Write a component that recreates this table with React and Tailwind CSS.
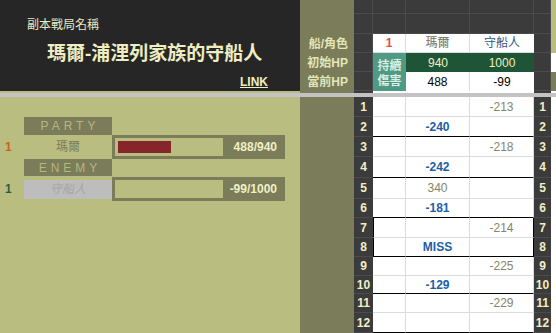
import React from "react";

const FONT = "font-['Liberation_Sans','Noto_Sans_CJK_TC',sans-serif]";

const rows = [
  { h: "h-[20px]", b: "", bc: "", c: "-213", line: "" },
  { h: "h-[20px]", b: "-240", bc: "blue", c: "", line: "black" },
  { h: "h-[20px]", b: "", bc: "", c: "-218", line: "" },
  { h: "h-[21px]", b: "-242", bc: "blue", c: "", line: "black" },
  { h: "h-[21px]", b: "340", bc: "gray", c: "", line: "" },
  { h: "h-[19px]", b: "-181", bc: "blue", c: "", line: "black" },
  { h: "h-[20px]", b: "", bc: "", c: "-214", line: "", box: true },
  { h: "h-[19px]", b: "MISS", bc: "blue", c: "", line: "black", box: true },
  { h: "h-[19px]", b: "", bc: "", c: "-225", line: "" },
  { h: "h-[18px]", b: "-129", bc: "blue", c: "", line: "black" },
  { h: "h-[19px]", b: "", bc: "", c: "-229", line: "" },
  { h: "h-[20px]", b: "", bc: "", c: "", line: "black" },
];

function DataRow({ r, i }) {
  const bb = r.line === "black" ? "border-b-black" : "border-b-[#dcdcdc]";
  const left = r.box ? "border-l border-l-black" : "";
  const right = r.box ? "border-r-black" : "border-r-[#dcdcdc]";
  const bColor =
    r.bc === "blue"
      ? "font-bold text-[#1c5ea6]"
      : "text-[#85856a]";
  return (
    <div className={`flex ${r.h}`}>
      <div className="w-[19px] h-full bg-[#3b3b3b] border-b border-b-[#4b4b4b] flex items-center justify-center text-[12px] font-bold text-[#f1efc4]">
        {i + 1}
      </div>
      <div className={`w-[33px] h-full bg-white border-b border-r border-r-[#dcdcdc] ${bb} ${left}`}></div>
      <div className={`w-[64px] h-full bg-white border-b border-r border-r-[#dcdcdc] ${bb} flex items-center justify-center text-[12px] ${bColor}`}>
        {r.b}
      </div>
      <div className={`w-[64px] h-full bg-white border-b border-r ${right} ${bb} flex items-center justify-center text-[12px] text-[#85856a]`}>
        {r.c}
      </div>
      <div className="w-[17px] h-full bg-[#3b3b3b] border-b border-b-[#4b4b4b] flex items-center justify-center text-[12px] font-bold text-[#f1efc4]">
        {i + 1}
      </div>
      <div className="w-[5px] h-full bg-white"></div>
    </div>
  );
}

function Bar({ fill }) {
  return (
    <div className="w-[173px] h-[24px] bg-[#7b7c5a] flex items-center p-[3px]">
      <div className="w-[108px] h-[18px] bg-[#b9bd7f] p-[3px]">
        {fill ? <div className="w-[53px] h-full bg-[#86252a]"></div> : null}
      </div>
      <div className="flex-1 text-right pr-[5px] font-bold text-[12px] text-[#f0f0c4]">
        {fill ? "488/940" : "-99/1000"}
      </div>
    </div>
  );
}

export default function App() {
  const dark = "bg-[#3b3b3b] border-b border-r border-[#4b4b4b]";
  return (
    <div className={`w-[556px] h-[333px] overflow-hidden flex flex-col ${FONT}`}>
      {/* top section */}
      <div className="flex h-[91px]">
        <div className="w-[300px] h-full bg-[#262626] flex flex-col">
          <div className="pl-[27px] pt-[17px] text-[12px] leading-[16px] text-[#ebe8c0]">副本戰局名稱</div>
          <div className="pl-[47px] mt-[8px] text-[19px] leading-[26px] font-bold text-[#eeeec2]">
            瑪爾-浦浬列家族的守船人
          </div>
          <div className="mt-[8px] self-end pr-[32px] text-[12px] leading-[14px] font-bold underline text-[#eeeec2]">
            LINK
          </div>
        </div>
        <div className="w-[256px] h-full grid grid-cols-[54px_19px_33px_64px_64px_17px_5px] grid-rows-[14px_20px_19px_19px_19px]">
          {/* row 1 */}
          <div className="bg-[#7b7c5a]"></div>
          <div className={dark}></div>
          <div className={dark}></div>
          <div className={dark}></div>
          <div className={dark}></div>
          <div className={dark}></div>
          <div className="bg-[#b9bd7f]"></div>
          {/* row 2 */}
          <div className="bg-[#7b7c5a]"></div>
          <div className={dark}></div>
          <div className={dark}></div>
          <div className={dark}></div>
          <div className={dark}></div>
          <div className={dark}></div>
          <div className="bg-[#b9bd7f]"></div>
          {/* row 3 */}
          <div className="bg-[#7b7c5a] flex items-center justify-end pr-[6px] text-[12px] font-bold text-[#e2e6b8]">船/角色</div>
          <div className={dark}></div>
          <div className="bg-white border-r border-b border-[#dcdcdc] flex items-center justify-center text-[12px] font-bold text-[#e04a4a]">1</div>
          <div className="bg-white border-r border-b border-[#dcdcdc] flex items-center justify-center text-[12px] text-[#6f6f5c]">瑪爾</div>
          <div className="bg-white border-b border-[#dcdcdc] flex items-center justify-center text-[12px] text-[#2e5880]">守船人</div>
          <div className={dark}></div>
          <div className="bg-[#b9bd7f]"></div>
          {/* row 4 */}
          <div className="bg-[#7b7c5a] flex items-center justify-end pr-[6px] text-[12px] font-bold text-[#e2e6b8]">初始HP</div>
          <div className={dark}></div>
          <div className="row-span-2 bg-[#4f9a87] flex flex-col items-center justify-center text-[12px] leading-[15px] font-bold text-[#dcefe2] pt-[4px]">
            <span>持續</span>
            <span>傷害</span>
          </div>
          <div className="bg-[#1e5536] flex items-center justify-center text-[12px] text-[#f0f0c4]">940</div>
          <div className="bg-[#1e5536] flex items-center justify-center text-[12px] text-[#f0f0c4]">1000</div>
          <div className={dark}></div>
          <div className="bg-white"></div>
          {/* row 5 */}
          <div className="bg-[#7b7c5a] flex items-center justify-end pr-[6px] text-[12px] font-bold text-[#e2e6b8]">當前HP</div>
          <div className={dark}></div>
          <div className="bg-white border-r border-[#dcdcdc] flex items-center justify-center text-[12px] text-black">488</div>
          <div className="bg-white flex items-center justify-center text-[12px] text-black">-99</div>
          <div className={dark}></div>
          <div className="bg-[#7b7c5a]"></div>
        </div>
      </div>
      {/* thin strip */}
      <div className="flex h-[2px]">
        <div className="w-[300px] bg-[#b9bd7f]"></div>
        <div className="w-[54px] bg-[#7b7c5a]"></div>
        <div className="w-[19px] bg-[#3b3b3b]"></div>
        <div className="w-[161px] bg-white"></div>
        <div className="w-[17px] bg-[#3b3b3b]"></div>
        <div className="w-[5px] bg-white"></div>
      </div>
      {/* gray band */}
      <div className="h-[4px] bg-[#c3c3c3]"></div>
      {/* bottom section */}
      <div className="flex flex-1">
        <div className="w-[300px] h-full bg-[#b9bd7f] pt-[20px] flex flex-col">
          <div className="ml-[24px] w-[88px] h-[18px] bg-[#7b7c5a] flex items-center justify-center pl-[4px] text-[12px] tracking-[4px] text-[#b5b87c]">
            PARTY
          </div>
          <div className="flex items-center h-[24px]">
            <div className="w-[24px] pl-[5px] text-[12px] font-bold text-[#c8641e]">1</div>
            <div className="w-[88px] text-center text-[12px] text-[#7b7c5a]">瑪爾</div>
            <Bar fill />
          </div>
          <div className="ml-[24px] w-[88px] h-[17px] bg-[#7b7c5a] flex items-center justify-center pl-[4px] text-[12px] tracking-[4px] text-[#b5b87c]">
            ENEMY
          </div>
          <div className="flex items-center h-[24px] mt-[1px]">
            <div className="w-[24px] pl-[5px] text-[12px] font-bold text-[#2a5e44]">1</div>
            <div className="w-[88px] h-[19px] bg-[#bdbdbd] flex items-center justify-center text-[12px] italic text-[#a5a5a5]">守船人</div>
            <Bar />
          </div>
        </div>
        <div className="w-[54px] h-full bg-[#7b7c5a]"></div>
        <div className="w-[202px] flex flex-col">
          {rows.map((r, i) => (
            <DataRow key={i} r={r} i={i} />
          ))}
        </div>
      </div>
    </div>
  );
}
